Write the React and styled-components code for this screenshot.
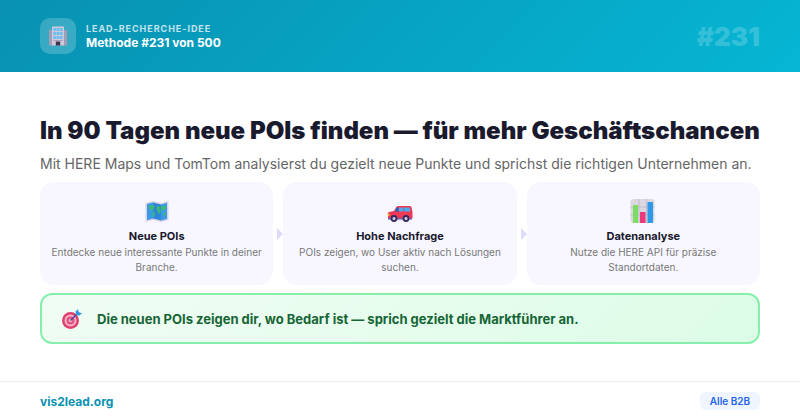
import React from "react"
import styled, { createGlobalStyle } from "styled-components"

const GlobalStyle = createGlobalStyle`
  html, body {
    margin: 0;
    padding: 0;
    background: #fff;
  }
  body {
    font-family: Inter, "Noto Sans", sans-serif;
  }
`

const Page = styled.div`
  width: 800px;
  height: 420px;
  display: flex;
  flex-direction: column;
  overflow: hidden;
`

const Header = styled.header`
  height: 72px;
  flex: none;
  padding: 0 40px;
  display: flex;
  align-items: center;
  justify-content: space-between;
  background: linear-gradient(135deg, #0891b2, #06b6d4);
`

const Brand = styled.div`
  display: flex;
  align-items: center;
  gap: 10px;
`

const LogoBox = styled.div`
  width: 36px;
  height: 36px;
  border-radius: 10px;
  background: rgba(255, 255, 255, 0.2);
  display: flex;
  align-items: center;
  justify-content: center;
`

const BrandText = styled.div`
  display: flex;
  flex-direction: column;
  gap: 1px;
`

const Eyebrow = styled.div`
  font-size: 9px;
  line-height: 11px;
  font-weight: 700;
  letter-spacing: 0.95px;
  color: rgba(255, 255, 255, 0.75);
`

const MethodName = styled.div`
  font-size: 12px;
  line-height: 15px;
  font-weight: 700;
  color: #fff;
`

const Number = styled.div`
  font-size: 26px;
  font-weight: 900;
  color: rgba(255, 255, 255, 0.2);
`

const Main = styled.main`
  flex: 1;
  padding: 44px 40px 0;
  display: flex;
  flex-direction: column;
`

const Title = styled.h1`
  margin: 0;
  font-size: 24px;
  line-height: 30px;
  font-weight: 900;
  color: #1a1a2e;
  white-space: nowrap;
`

const Subtitle = styled.p`
  margin: 7px 0 8px;
  font-size: 14px;
  line-height: 21px;
  color: #666;
  white-space: nowrap;
`

const Steps = styled.div`
  display: flex;
  align-items: center;
`

const Step = styled.div`
  flex: 1;
  height: 103px;
  box-sizing: border-box;
  padding: 16px 10px 0;
  border-radius: 14px;
  background: #f8f7ff;
  text-align: center;
`

const StepIcon = styled.div`
  height: 26px;
  display: flex;
  justify-content: center;
`

const StepTitle = styled.div`
  margin-top: 5px;
  font-size: 11px;
  line-height: 14px;
  font-weight: 700;
  color: #1a1a2e;
`

const StepText = styled.div`
  margin-top: 2px;
  font-size: 10px;
  line-height: 14.5px;
  color: #777;
`

const Arrow = styled.div`
  flex: none;
  width: 10px;
  display: flex;
  justify-content: flex-end;

  &::before {
    content: "";
    border-left: 6px solid #dddbfb;
    border-top: 6px solid transparent;
    border-bottom: 6px solid transparent;
  }
`

const Callout = styled.div`
  margin-top: 8px;
  height: 51px;
  box-sizing: border-box;
  padding: 0 20px;
  display: flex;
  align-items: center;
  gap: 15px;
  border: 2px solid #86efac;
  border-radius: 12px;
  background: linear-gradient(135deg, #f0fdf4, #dcfce7);
`

const CalloutText = styled.div`
  font-size: 13px;
  font-weight: 700;
  color: #166534;
`

const Footer = styled.footer`
  height: 38px;
  flex: none;
  padding: 0 40px;
  display: flex;
  align-items: center;
  justify-content: space-between;
  border-top: 1px solid #eee;
`

const Site = styled.div`
  font-size: 12px;
  font-weight: 700;
  color: #0891b2;
`

const Tag = styled.div`
  width: 60px;
  height: 18px;
  border-radius: 6px;
  background: #eff6ff;
  display: flex;
  align-items: center;
  justify-content: center;
  font-size: 10px;
  font-weight: 600;
  color: #2563eb;
`

const BuildingIcon = () => (
  <svg width="20" height="20" viewBox="0 0 20 20">
    <rect x="1" y="4" width="3.5" height="15.5" fill="#a49bb5" />
    <rect x="15.5" y="4" width="3.5" height="15.5" fill="#a49bb5" />
    <rect x="4" y="0.5" width="12" height="19" fill="#cfc8da" />
    {[2, 6, 10].map(y =>
      [5.3, 8.6, 11.9].map(x => <rect key={`${x}-${y}`} x={x} y={y} width="2.8" height="3" fill="#6cc0f0" />)
    )}
    <rect x="5.3" y="14" width="9.4" height="1" fill="#a79fb6" />
    <rect x="7.8" y="15.5" width="4.4" height="4" fill="#3d3550" />
  </svg>
)

const MapIcon = () => (
  <svg width="26" height="26" viewBox="0 0 26 26">
    <path d="M1.5 5 L9 3 L17 5 L24.5 3 V22 L17 24 L9 22 L1.5 24 Z" fill="#dcd2e8" />
    <path d="M3 6 L9 4.4 V20.6 L3 22.2 Z" fill="#3b9ae6" />
    <path d="M9 4.4 L17 6.4 V22.6 L9 20.6 Z" fill="#2f86d8" />
    <path d="M17 6.4 L23 4.8 V21 L17 22.6 Z" fill="#3b9ae6" />
    <path d="M4.5 8 L9 6.8 L10.5 9 L9 11 L9.5 13 L7.5 12.5 L5.5 10.5 Z" fill="#3dbb72" />
    <path d="M8.5 14 L11 14.5 L10.5 18.5 L9 19 Z" fill="#3dbb72" />
    <path d="M13 8 L16 8.5 L15.5 11 L17 13.5 L15 16 L13.5 13 L12.5 10.5 Z" fill="#3dbb72" />
    <path d="M16.5 8.5 L22 7.5 L21.5 11 L19 12.5 L17 11.5 Z" fill="#3dbb72" />
    <path d="M19.5 15 L22 14.5 L21.5 17.5 L19.5 17.5 Z" fill="#3dbb72" />
  </svg>
)

const CarIcon = () => (
  <svg width="26" height="26" viewBox="0 0 26 26">
    <path d="M1 15.5 Q1 14 3 13.7 L7 13 L9.5 8.8 Q10 8 11 8 H23 Q24.5 8 24.6 9.5 L25.5 14 V19.5 Q25.5 21 24 21 H2 Q1 21 1 20 Z" fill="#ef3a55" />
    <path d="M7.5 13.5 L9.8 9.6 H11.5 V13.5 Z" fill="#2b5fb8" />
    <path d="M12 9.6 H16.4 V13.5 H12 Z" fill="#45aef0" />
    <path d="M17.2 9.6 H22.6 L23.2 13.5 H17.2 Z" fill="#45aef0" />
    <rect x="0.5" y="15.8" width="2" height="2.2" fill="#f5b83d" />
    <rect x="1" y="20" width="24" height="1.6" fill="#7b5aa8" />
    <circle cx="7" cy="20.5" r="3.4" fill="#3a2a5e" />
    <circle cx="7" cy="20.5" r="1.5" fill="#d8cfe6" />
    <circle cx="19" cy="20.5" r="3.4" fill="#3a2a5e" />
    <circle cx="19" cy="20.5" r="1.5" fill="#d8cfe6" />
  </svg>
)

const ChartIcon = () => (
  <svg width="26" height="26" viewBox="0 0 26 26">
    <rect x="0.5" y="1" width="24" height="24" rx="3" fill="#dcd8e2" />
    <path d="M9 1 V25 M16.5 1 V25 M0.5 9 H24.5 M0.5 17 H24.5" stroke="#bdb8c6" strokeWidth="0.8" />
    <rect x="3" y="7" width="5" height="18" fill="#7ddc62" />
    <rect x="10" y="14" width="5.5" height="11" fill="#ea3a7c" />
    <rect x="17.5" y="4" width="5.5" height="21" rx="0.5" fill="#2f9be8" />
  </svg>
)

const TargetIcon = () => (
  <svg width="20" height="20" viewBox="0 0 20 20">
    <circle cx="8.5" cy="11.5" r="8.5" fill="#df3f6f" />
    <circle cx="8.5" cy="11.5" r="6" fill="#f7b4c8" />
    <circle cx="8.5" cy="11.5" r="4" fill="#e4507e" />
    <circle cx="8.5" cy="11.5" r="1.8" fill="#f7b4c8" />
    <path d="M8.5 11.5 L17 3" stroke="#3b4a9a" strokeWidth="1.2" />
    <path d="M13.5 2.5 L16 0 L16.5 3.5 L20 4 L17.5 6.5 L14 6 Z" fill="#2f9be8" />
  </svg>
)

const steps = [
  { icon: <MapIcon />, title: "Neue POIs", text: "Entdecke neue interessante Punkte in deiner Branche." },
  { icon: <CarIcon />, title: "Hohe Nachfrage", text: "POIs zeigen, wo User aktiv nach Lösungen suchen." },
  { icon: <ChartIcon />, title: "Datenanalyse", text: "Nutze die HERE API für präzise Standortdaten." }
]

const App = () => (
  <Page>
    <GlobalStyle />
    <Header>
      <Brand>
        <LogoBox>
          <BuildingIcon />
        </LogoBox>
        <BrandText>
          <Eyebrow>LEAD-RECHERCHE-IDEE</Eyebrow>
          <MethodName>Methode #231 von 500</MethodName>
        </BrandText>
      </Brand>
      <Number>#231</Number>
    </Header>
    <Main>
      <Title>In 90 Tagen neue POIs finden — für mehr Geschäftschancen</Title>
      <Subtitle>
        Mit HERE Maps und TomTom analysierst du gezielt neue Punkte und sprichst die richtigen Unternehmen an.
      </Subtitle>
      <Steps>
        {steps.map((step, index) => (
          <React.Fragment key={step.title}>
            {index > 0 && <Arrow />}
            <Step>
              <StepIcon>{step.icon}</StepIcon>
              <StepTitle>{step.title}</StepTitle>
              <StepText>{step.text}</StepText>
            </Step>
          </React.Fragment>
        ))}
      </Steps>
      <Callout>
        <TargetIcon />
        <CalloutText>Die neuen POIs zeigen dir, wo Bedarf ist — sprich gezielt die Marktführer an.</CalloutText>
      </Callout>
    </Main>
    <Footer>
      <Site>vis2lead.org</Site>
      <Tag>Alle B2B</Tag>
    </Footer>
  </Page>
)

export default App
